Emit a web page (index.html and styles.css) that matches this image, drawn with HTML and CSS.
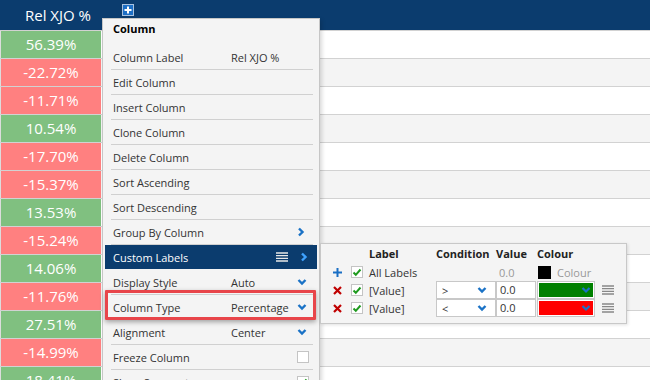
FILE: index.html
```html
<!DOCTYPE html>
<html lang="en">
<head>
  <meta charset="UTF-8" />
  <title>Column Menu</title>
  <link rel="stylesheet" href="styles.css">
</head>
<body>

<div class="sheet">

  <div class="sheet-head">
    <div class="head-label">Rel XJO %</div>
    <div class="add-btn">
      <svg width="10" height="10" viewBox="0 0 10 10"><path d="M5 1.5v7M1.5 5h7" stroke="#fff" stroke-width="2"/></svg>
    </div>
  </div>

  <div class="rows">
    <div class="row"><div class="value-cell up">56.39%</div></div>
    <div class="row"><div class="value-cell down">-22.72%</div></div>
    <div class="row"><div class="value-cell down">-11.71%</div></div>
    <div class="row"><div class="value-cell up">10.54%</div></div>
    <div class="row"><div class="value-cell down">-17.70%</div></div>
    <div class="row"><div class="value-cell down">-15.37%</div></div>
    <div class="row"><div class="value-cell up">13.53%</div></div>
    <div class="row"><div class="value-cell down">-15.24%</div></div>
    <div class="row"><div class="value-cell up">14.06%</div></div>
    <div class="row"><div class="value-cell down">-11.76%</div></div>
    <div class="row"><div class="value-cell up">27.51%</div></div>
    <div class="row"><div class="value-cell down">-14.99%</div></div>
    <div class="row"><div class="value-cell up">18.41%</div></div>
  </div>

  <!-- column context menu -->
  <div class="col-menu">
    <div class="menu-title">Column</div>
    <div class="menu-item"><span class="item-label">Column Label</span><span class="item-value">Rel XJO %</span></div>
    <div class="menu-item"><span class="item-label">Edit Column</span></div>
    <div class="menu-item"><span class="item-label">Insert Column</span></div>
    <div class="menu-item"><span class="item-label">Clone Column</span></div>
    <div class="menu-item"><span class="item-label">Delete Column</span></div>
    <div class="menu-item"><span class="item-label">Sort Ascending</span></div>
    <div class="menu-item"><span class="item-label">Sort Descending</span></div>
    <div class="menu-item">
      <span class="item-label">Group By Column</span><span class="item-value"></span>
      <span class="item-icon"><svg width="8" height="10" viewBox="0 0 8 10"><path d="M2 1.5l3.5 3.5-3.5 3.5" fill="none" stroke="#1a72c6" stroke-width="2.4"/></svg></span>
    </div>
    <div class="menu-item active">
      <span class="item-label">Custom Labels</span><span class="item-value"></span>
      <span class="handle-icon"><svg width="12" height="10" viewBox="0 0 12 10"><path d="M0 1h12M0 3.7h12M0 6.3h12M0 9h12" stroke="#e8e8e8" stroke-width="1.3"/></svg></span>
      <span class="item-icon"><svg width="8" height="10" viewBox="0 0 8 10"><path d="M2 1.5l3.5 3.5-3.5 3.5" fill="none" stroke="#3fa2ff" stroke-width="2.4"/></svg></span>
    </div>
    <div class="menu-item">
      <span class="item-label">Display Style</span><span class="item-value">Auto</span>
      <span class="item-icon"><svg width="10" height="8" viewBox="0 0 10 8"><path d="M1.5 2l3.5 3.5 3.5-3.5" fill="none" stroke="#1a72c6" stroke-width="2.4"/></svg></span>
    </div>
    <div class="menu-item">
      <span class="item-label">Column Type</span><span class="item-value">Percentage</span>
      <span class="item-icon"><svg width="10" height="8" viewBox="0 0 10 8"><path d="M1.5 2l3.5 3.5 3.5-3.5" fill="none" stroke="#1a72c6" stroke-width="2.4"/></svg></span>
    </div>
    <div class="menu-item">
      <span class="item-label">Alignment</span><span class="item-value">Center</span>
      <span class="item-icon"><svg width="10" height="8" viewBox="0 0 10 8"><path d="M1.5 2l3.5 3.5 3.5-3.5" fill="none" stroke="#1a72c6" stroke-width="2.4"/></svg></span>
    </div>
    <div class="menu-item">
      <span class="item-label">Freeze Column</span><span class="item-value"></span>
      <span class="item-icon"><span class="check-box"></span></span>
    </div>
    <div class="menu-item">
      <span class="item-label">Show Segments</span><span class="item-value"></span>
      <span class="item-icon"><span class="check-box"><svg width="10" height="10" viewBox="0 0 10 10"><path d="M1.5 5.5l2.3 2.3 4.7-5.3" fill="none" stroke="#1e9a1e" stroke-width="2"/></svg></span></span>
    </div>

    <div class="callout"></div>
  </div>

  <!-- custom labels sub panel -->
  <div class="labels-panel">
    <div class="labels-grid">
      <span></span><span></span>
      <span class="col-head">Label</span>
      <span class="col-head">Condition</span>
      <span class="col-head">Value</span>
      <span class="col-head">Colour</span>
      <span></span>

      <span class="row-icon"><svg width="9" height="9" viewBox="0 0 9 9"><path d="M4.5 0v9M0 4.5h9" stroke="#1a6fc4" stroke-width="2"/></svg></span>
      <span class="check-box"><svg width="10" height="10" viewBox="0 0 10 10"><path d="M1.5 5.5l2.3 2.3 4.7-5.3" fill="none" stroke="#1e9a1e" stroke-width="2"/></svg></span>
      <span>All Labels</span>
      <span></span>
      <span class="muted val-text">0.0</span>
      <span class="swatch-line"><span class="swatch"></span><span class="muted">Colour</span></span>
      <span></span>

      <span class="row-icon"><svg width="9" height="9" viewBox="0 0 9 9"><path d="M1 1l7 7M8 1l-7 7" stroke="#c00000" stroke-width="2.2"/></svg></span>
      <span class="check-box"><svg width="10" height="10" viewBox="0 0 10 10"><path d="M1.5 5.5l2.3 2.3 4.7-5.3" fill="none" stroke="#1e9a1e" stroke-width="2"/></svg></span>
      <span>[Value]</span>
      <span class="select-box">&gt;<svg width="10" height="8" viewBox="0 0 10 8"><path d="M1.5 2l3.5 3.5 3.5-3.5" fill="none" stroke="#1a72c6" stroke-width="2.4"/></svg></span>
      <span class="input-box">0.0</span>
      <span class="colour-box"><span class="fill green"><svg width="10" height="8" viewBox="0 0 10 8"><path d="M1.5 2l3.5 3.5 3.5-3.5" fill="none" stroke="#1a72c6" stroke-width="2.2"/></svg></span></span>
      <span class="drag"><svg width="12" height="10" viewBox="0 0 12 10"><path d="M0 1h12M0 3.7h12M0 6.3h12M0 9h12" stroke="#888" stroke-width="1.3"/></svg></span>

      <span class="row-icon"><svg width="9" height="9" viewBox="0 0 9 9"><path d="M1 1l7 7M8 1l-7 7" stroke="#c00000" stroke-width="2.2"/></svg></span>
      <span class="check-box"><svg width="10" height="10" viewBox="0 0 10 10"><path d="M1.5 5.5l2.3 2.3 4.7-5.3" fill="none" stroke="#1e9a1e" stroke-width="2"/></svg></span>
      <span>[Value]</span>
      <span class="select-box">&lt;<svg width="10" height="8" viewBox="0 0 10 8"><path d="M1.5 2l3.5 3.5 3.5-3.5" fill="none" stroke="#1a72c6" stroke-width="2.4"/></svg></span>
      <span class="input-box">0.0</span>
      <span class="colour-box"><span class="fill red"><svg width="10" height="8" viewBox="0 0 10 8"><path d="M1.5 2l3.5 3.5 3.5-3.5" fill="none" stroke="#1a72c6" stroke-width="2.2"/></svg></span></span>
      <span class="drag"><svg width="12" height="10" viewBox="0 0 12 10"><path d="M0 1h12M0 3.7h12M0 6.3h12M0 9h12" stroke="#888" stroke-width="1.3"/></svg></span>
    </div>
  </div>

</div>

</body>
</html>
```

FILE: styles.css
```css
* {
  box-sizing: border-box;
}

body {
  margin: 0;
  font-family: 'Open Sans', sans-serif;
  background: #fff;
  color: #333;
}

.sheet {
  position: relative;
  width: 650px;
  height: 380px;
  overflow: hidden;
}

.sheet-head {
  display: flex;
  height: 30px;
  background: #0b3c6e;
  color: #fff;
}

.head-label {
  width: 101px;
  padding-left: 25px;
  font-size: 15px;
  line-height: 30px;
}

.add-btn {
  display: flex;
  align-items: center;
  justify-content: center;
  width: 12px;
  height: 12px;
  margin: 4px 0 0 21px;
  background: #1c6fc6;
  border: 1px solid #a9c3e0;
}

.row {
  display: flex;
  height: 28px;
  border-top: 1px solid #d2d2d2;
  background: #fff;
}

.row:nth-child(even) {
  background: #f4f4f4;
}

.value-cell {
  width: 101px;
  border-left: 1px solid #ddd;
  text-align: center;
  color: #fff;
  font-size: 15px;
  line-height: 27px;
}

.up {
  background: #80c080;
}

.down {
  background: #ff8080;
}

/* context menu */
.col-menu {
  position: absolute;
  left: 102px;
  top: 18px;
  width: 218px;
  height: 380px;
  background: #f4f4f4;
  border: 1px solid #c6c6c6;
  box-shadow: 2px 2px 4px rgba(0,0,0,0.15);
  font-size: 11px;
  color: #333;
}

.menu-title {
  height: 26px;
  padding: 1px 0 0 10px;
  font-weight: bold;
  line-height: 18px;
  color: #000;
}

.menu-item {
  display: flex;
  align-items: center;
  height: 25px;
  margin: 0 6px 0 8px;
  padding-left: 2px;
  border-bottom: 1px solid #d0d0d0;
}

.item-label {
  width: 118px;
}

.item-value {
  flex: 1;
}

.item-icon {
  display: flex;
  align-items: center;
  width: 13px;
  margin-right: 3px;
}

.menu-item.active {
  height: 24px;
  margin: 0 2px 1px;
  padding: 0 1px 0 8px;
  border-bottom: 0;
  background: #0b3c6e;
  color: #fff;
}

.handle-icon {
  display: flex;
  margin-right: 12px;
}

.check-box {
  display: flex;
  align-items: center;
  justify-content: center;
  width: 12px;
  height: 12px;
  background: #fff;
  border: 1px solid #c4c4c4;
}

.callout {
  position: absolute;
  left: 2px;
  top: 271px;
  width: 211px;
  height: 30px;
  border: 3px solid #e8454a;
  border-radius: 1px;
  box-shadow: 0 2px 5px rgba(0,0,0,0.35);
}

/* custom labels panel */
.labels-panel {
  position: absolute;
  left: 320px;
  top: 243px;
  width: 307px;
  height: 81px;
  padding: 0 0 0 10px;
  background: #f4f4f4;
  border: 1px solid #c8c8c8;
  box-shadow: 1px 1px 3px rgba(0,0,0,0.12);
  font-size: 11px;
  color: #333;
}

.labels-grid {
  display: grid;
  grid-template-columns: 20px 18px 67px 60px 41px 58px 1fr;
  grid-template-rows: 19px 18px 18px 18px;
  align-items: center;
}

.col-head {
  font-weight: bold;
  color: #222;
}

.row-icon {
  display: flex;
  padding-left: 2px;
}

.muted {
  color: #999;
}

.val-text {
  padding-left: 3px;
}

.swatch-line {
  display: flex;
  align-items: center;
  padding-left: 1px;
}

.swatch {
  width: 13px;
  height: 13px;
  margin-right: 6px;
  background: #000;
}

.select-box {
  display: flex;
  align-items: center;
  justify-content: space-between;
  height: 18px;
  padding: 0 8px 0 5px;
  background: #fff;
  border: 1px solid #c8c8c8;
}

.input-box {
  width: 40px;
  height: 18px;
  padding-left: 3px;
  line-height: 16px;
  background: #fff;
  border: 1px solid #c8c8c8;
}

.colour-box {
  height: 18px;
  padding: 1px;
  background: #fff;
  border: 1px solid #c8c8c8;
}

.fill {
  display: flex;
  align-items: center;
  justify-content: flex-end;
  height: 100%;
  padding-right: 2px;
}

.green {
  background: #008000;
}

.red {
  background: #ff0000;
}

.drag {
  display: flex;
  padding-left: 7px;
}
```
